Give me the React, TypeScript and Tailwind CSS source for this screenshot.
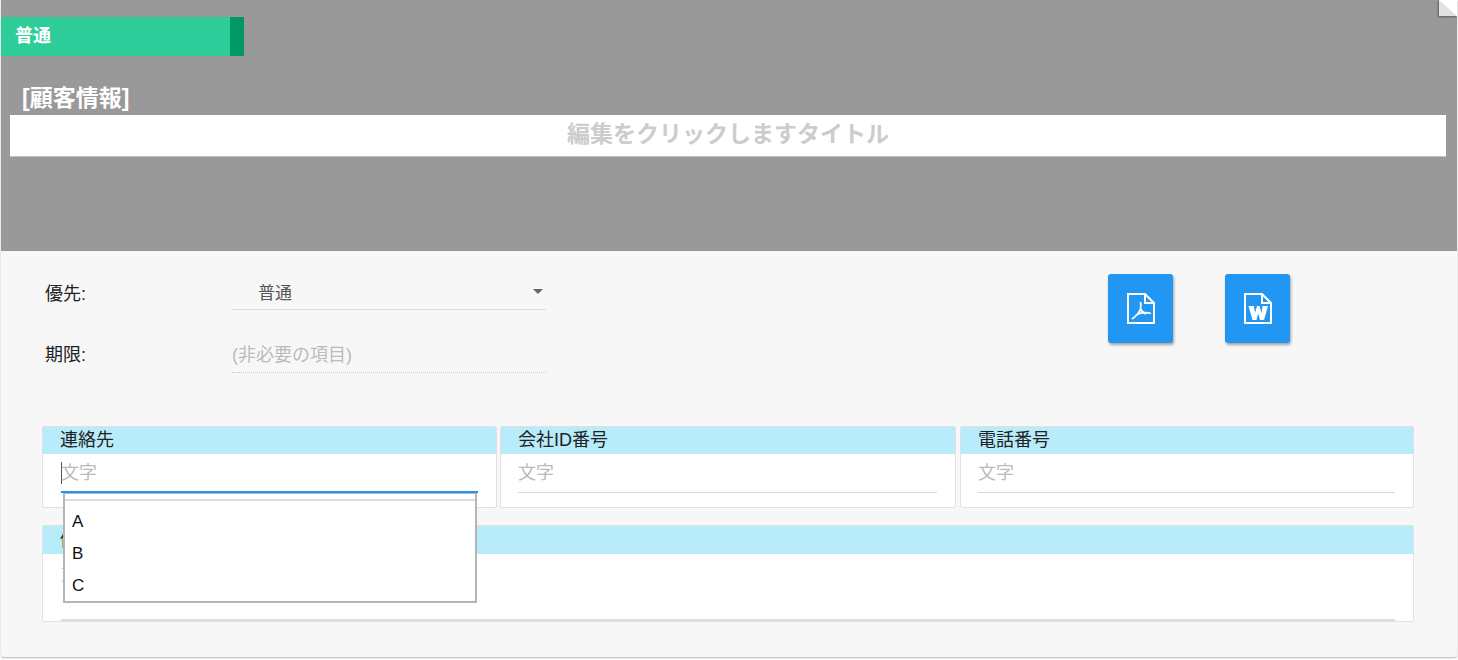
const font = "[font-family:'Liberation_Sans','Noto_Sans_CJK_JP',sans-serif]";

function PdfIcon() {
  return (
    <svg width="28" height="31" viewBox="0 0 28 31" fill="none" stroke="white" strokeWidth="2">
      <path d="M1 1H18L27 10V30H1Z" />
      <path d="M18 1V10H27" />
      <path d="M5 26C8 24 12 20 13.500 16C14 13 14 11 13.500 9M13.500 16C15 19 16 20 19 21M9 22C13 20 19 19 24 20.500" strokeWidth="1.8" />
    </svg>
  );
}

function WordIcon() {
  return (
    <svg width="28" height="31" viewBox="0 0 28 31" fill="none" stroke="white" strokeWidth="2">
      <path d="M1 1H18L27 10V30H1Z" />
      <path d="M18 1V10H27" />
      <path d="M4.500 13H10L11 20L13 13H15.500L17.500 20L18.500 13H24L20 27H16L14.200 20.500L12.500 27H8.500Z" fill="white" stroke="none" />
    </svg>
  );
}

function Field({ label, className, caret }: { label: string; className: string; caret?: boolean }) {
  return (
    <div className={`${className} h-[82px] shrink-0 rounded-[2px] border border-[#e0e0e0] bg-white`}>
      <div className="h-[27px] bg-[#b9ecfb] pl-[17px] text-[18px] leading-[27px] text-[#222]">{label}</div>
      <div className="ml-[17px] mr-[18px] mt-[7px] flex h-[32px] items-start border-b border-[#d8d8d8] text-[18px] leading-[24px] text-[#bbb]">
        {caret && <span className="-mr-px ml-px mt-[1px] h-[22px] w-px bg-[#555]" />}
        文字
      </div>
    </div>
  );
}

export default function App() {
  return (
    <div className={`h-[660px] w-[1458px] overflow-hidden bg-white ${font}`}>
      <div className="relative ml-px h-[657px] w-[1456px] rounded-b-[3px] bg-[#f7f7f7] shadow-[0_1px_2px_rgba(0,0,0,0.3)]">
        <div className="relative h-[251px] bg-[#999999] pt-[17px]">
          <div className="flex h-[39px] w-[243px] bg-[#2ecc98]">
            <div className="flex-1 pl-[14px] text-[18px] font-bold leading-[38px] text-white">普通</div>
            <div className="w-[14px] bg-[#009966]" />
          </div>
          <div className="mt-[26px] pl-[21px] text-[23px] font-bold leading-[33px] text-white">[顧客情報]</div>
          <div className="ml-[9px] mr-[11px] h-[41px] bg-white text-center text-[23px] font-bold leading-[39px] text-[#cccccc] shadow-[0_1px_0_rgba(255,255,255,0.4)]">
            編集をクリックしますタイトル
          </div>
          <div className="absolute right-0 top-0 h-[16px] w-[18px] bg-white shadow-[-1px_1px_2px_rgba(0,0,0,0.4)]">
            <div className="h-full w-full bg-[#e2e2e2] [clip-path:polygon(0_0,100%_100%,0_100%)]" />
          </div>
        </div>

        <div className="flex pl-[44px] pt-[23px]">
          <div className="w-[501px]">
            <div className="flex h-[36px]">
              <div className="w-[187px] text-[18px] leading-[41px] text-[#222]">優先:</div>
              <div className="flex h-[36px] w-[314px] items-center justify-between border-b border-[#dcdcdc] pl-[26px] pr-[3px] text-[17px] text-[#555]">
                <span className="mt-[4px]">普通</span>
                <span className="h-0 w-0 border-x-[5px] border-t-[5px] border-x-transparent border-t-[#666]" />
              </div>
            </div>
            <div className="mt-[25px] flex h-[38px]">
              <div className="w-[187px] text-[18px] leading-[41px] text-[#222]">期限:</div>
              <div className="h-[38px] w-[314px] border-b border-dotted border-[#c8c8c8] text-[18px] leading-[41px] text-[#bbb]">(非必要の項目)</div>
            </div>
          </div>
          <div className="ml-[562px] flex gap-[52px]">
            <button type="button" className="flex h-[69px] w-[65px] items-center justify-center rounded-[3px] bg-[#2196f3] shadow-[1px_2px_3px_rgba(0,0,0,0.35)]">
              <PdfIcon />
            </button>
            <button type="button" className="flex h-[69px] w-[65px] items-center justify-center rounded-[3px] bg-[#2196f3] shadow-[1px_2px_3px_rgba(0,0,0,0.35)]">
              <WordIcon />
            </button>
          </div>
        </div>

        <div className="mt-[53px] flex gap-[3px] pl-[41px]">
          <Field label="連絡先" className="w-[455px]" caret />
          <Field label="会社ID番号" className="w-[456px]" />
          <Field label="電話番号" className="ml-px w-[454px]" />
        </div>

        <div className="ml-[41px] mt-[17px] h-[97px] w-[1372px] rounded-[2px] border border-[#e0e0e0] bg-white">
          <div className="h-[28px] bg-[#b9ecfb] pl-[17px] text-[18px] leading-[28px] text-[#222]">備考</div>
          <div className="mx-[18px] mt-[8px] h-[59px] border-b-2 border-[#dedede] text-[18px] leading-[24px] text-[#bbb]">文字</div>
        </div>

        <div className="absolute left-[60px] top-[491px] h-[2px] w-[417px] bg-[#2196f3]" />
        <div className="absolute left-[62px] top-[493px] h-[110px] w-[414px] border-2 border-t border-[#b5b5b5] bg-white">
          <div className="h-[7px] border-b-2 border-[#dcdcdc]" />
          <div className="pl-[7px] pt-[5px] text-[17px] leading-[32px] text-[#111]">
            <div>A</div>
            <div>B</div>
            <div>C</div>
          </div>
        </div>
      </div>
    </div>
  );
}
